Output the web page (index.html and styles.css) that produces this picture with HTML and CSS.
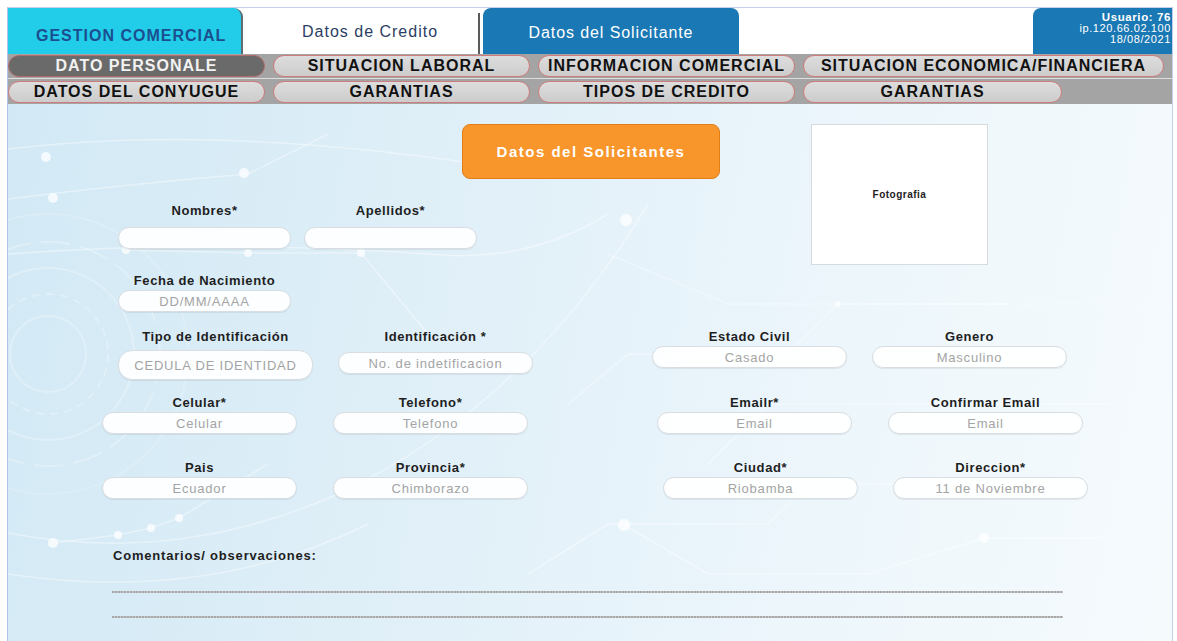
FILE: index.html
```html
<!DOCTYPE html>
<html lang="es">
<head>
    <meta charset="UTF-8">
    <meta name="viewport" content="width=device-width, initial-scale=1.0">
    <title>Datos del Solicitante</title>
    <link rel="stylesheet" href="styles.css">
</head>
<body>
<div class="marco">
    <header class="cabecera">
        <div class="tab-gestion">GESTION COMERCIAL</div>
        <div class="tab-credito">Datos de Credito</div>
        <div class="tab-solicitante">Datos del Solicitante</div>
        <div class="espacio"></div>
        <div class="usuario">
            <div class="usuario-nombre">Usuario: 76</div>
            <div>ip.120.66.02.100</div>
            <div>18/08/2021</div>
        </div>
    </header>

    <nav class="menu">
        <div class="menu-fila">
            <a class="boton activo">DATO PERSONALE</a>
            <a class="boton">SITUACION LABORAL</a>
            <a class="boton">INFORMACION COMERCIAL</a>
            <a class="boton boton-largo">SITUACION ECONOMICA/FINANCIERA</a>
        </div>
        <div class="menu-fila">
            <a class="boton">DATOS DEL CONYUGUE</a>
            <a class="boton">GARANTIAS</a>
            <a class="boton">TIPOS DE CREDITO</a>
            <a class="boton boton-medio">GARANTIAS</a>
        </div>
    </nav>

    <main class="contenido">
        <!-- fondo decorativo tipo circuito -->
        <svg class="fondo" width="1164" height="537" viewBox="0 0 1164 537">
            <g fill="none" stroke="#ffffff" stroke-opacity="0.4" stroke-width="1.5">
                <path d="M0 45 Q 200 20 470 60"/>
                <path d="M0 95 Q 120 80 240 70 L 320 30"/>
                <path d="M0 150 Q 200 135 420 150 Q 520 160 600 110"/>
                <path d="M118 146 L 240 149 L 353 149 L 420 230"/>
                <path d="M-40 420 Q 150 470 330 390 Q 520 300 640 100"/>
                <path d="M0 470 Q 200 500 360 420"/>
                <path d="M45 439 L 110 431 L 143 424 L 171 414 L 260 360"/>
                <path d="M560 300 L 620 250 L 780 250 L 830 200 L 1000 200"/>
                <path d="M520 470 L 600 420 L 760 420 L 800 380 L 1000 380"/>
                <path d="M700 360 L 760 300 L 1100 300"/>
                <path d="M616 421 L 700 470 L 860 470 L 976 434 L 1100 434"/>
                <path d="M600 150 L 720 200 L 1164 200" stroke-opacity="0.3"/>
            </g>
            <g fill="none" stroke="#ffffff" stroke-opacity="0.28" stroke-width="2">
                <circle cx="40" cy="250" r="38"/>
                <circle cx="40" cy="250" r="60" stroke-dasharray="8 6"/>
                <circle cx="40" cy="250" r="86"/>
                <circle cx="40" cy="250" r="112" stroke-dasharray="30 10"/>
                <circle cx="40" cy="250" r="140" stroke-opacity="0.18"/>
            </g>
            <g fill="#ffffff" fill-opacity="0.75">
                <circle cx="38" cy="53" r="5"/>
                <circle cx="236" cy="69" r="5"/>
                <circle cx="45" cy="94" r="5"/>
                <circle cx="118" cy="146" r="4"/>
                <circle cx="240" cy="149" r="4"/>
                <circle cx="353" cy="149" r="4"/>
                <circle cx="618" cy="116" r="6"/>
                <circle cx="45" cy="439" r="5"/>
                <circle cx="110" cy="431" r="4"/>
                <circle cx="143" cy="424" r="4"/>
                <circle cx="171" cy="414" r="4"/>
                <circle cx="616" cy="421" r="6"/>
                <circle cx="976" cy="434" r="5"/>
                <circle cx="830" cy="200" r="3"/>
            </g>
        </svg>

        <div class="formulario">
            <div class="superior">
                <div class="superior-izq">
                    <div class="titulo">Datos del Solicitantes</div>

                    <div class="fila fila-nombres">
                        <div class="campo corto">
                            <div class="etiqueta">Nombres*</div>
                            <div class="caja"></div>
                        </div>
                        <div class="campo corto">
                            <div class="etiqueta">Apellidos*</div>
                            <div class="caja"></div>
                        </div>
                    </div>

                    <div class="fila fila-fecha">
                        <div class="campo corto">
                            <div class="etiqueta">Fecha de Nacimiento</div>
                            <div class="caja">DD/MM/AAAA</div>
                        </div>
                    </div>
                </div>
                <div class="foto">Fotografia</div>
            </div>

            <div class="fila fila-ident">
                <div class="campo">
                    <div class="etiqueta">Tipo de Identificación</div>
                    <div class="caja caja-alta">CEDULA DE IDENTIDAD</div>
                </div>
                <div class="campo">
                    <div class="etiqueta">Identificación *</div>
                    <div class="caja caja-baja">No. de indetificacion</div>
                </div>
                <div class="campo estado">
                    <div class="etiqueta">Estado Civil</div>
                    <div class="caja">Casado</div>
                </div>
                <div class="campo genero">
                    <div class="etiqueta">Genero</div>
                    <div class="caja">Masculino</div>
                </div>
            </div>

            <div class="fila fila-contacto">
                <div class="campo">
                    <div class="etiqueta">Celular*</div>
                    <div class="caja">Celular</div>
                </div>
                <div class="campo">
                    <div class="etiqueta">Telefono*</div>
                    <div class="caja">Telefono</div>
                </div>
                <div class="campo email">
                    <div class="etiqueta">Emailr*</div>
                    <div class="caja">Email</div>
                </div>
                <div class="campo confirmar">
                    <div class="etiqueta">Confirmar Email</div>
                    <div class="caja">Email</div>
                </div>
            </div>

            <div class="fila fila-ubicacion">
                <div class="campo">
                    <div class="etiqueta">Pais</div>
                    <div class="caja">Ecuador</div>
                </div>
                <div class="campo">
                    <div class="etiqueta">Provincia*</div>
                    <div class="caja">Chimborazo</div>
                </div>
                <div class="campo ciudad">
                    <div class="etiqueta">Ciudad*</div>
                    <div class="caja">Riobamba</div>
                </div>
                <div class="campo direccion">
                    <div class="etiqueta">Direccion*</div>
                    <div class="caja">11 de Noviembre</div>
                </div>
            </div>

            <div class="comentarios">Comentarios/ observaciones:</div>
            <div class="linea"></div>
            <div class="linea"></div>
        </div>
    </main>
</div>
</body>
</html>
```

FILE: styles.css
```css
body {
    margin: 0;
    background-color: white;
    font-family: "Liberation Sans", Arial, sans-serif;
    color: #1e1e1e;
}

.marco {
    margin: 7px 0 0 7px;
    width: 1166px;
    height: 634px;
    box-sizing: border-box;
    border-top: 1px solid #c7cdee;
    border-left: 1px solid #b3c2ea;
    border-right: 1px solid #c3cdec;
    display: flex;
    flex-direction: column;
    overflow: hidden;
}

/* Cabecera con pestanas */
.cabecera {
    display: flex;
    height: 46px;
    background-color: white;
}

.tab-gestion {
    width: 235px;
    box-sizing: border-box;
    background-color: #21cde8;
    border-top-right-radius: 9px;
    border-right: 2px solid #5f6c74;
    color: #1c4f8f;
    font-size: 16px;
    font-weight: bold;
    letter-spacing: 1px;
    line-height: 20px;
    padding: 18px 0 0 28px;
    white-space: nowrap;
}

.tab-credito {
    width: 237px;
    margin: 5px 3px 0 0;
    box-sizing: border-box;
    border-right: 2px solid #5a5a5a;
    color: #2b3e63;
    font-size: 16px;
    letter-spacing: 1px;
    line-height: 20px;
    padding: 9px 0 0 59px;
    white-space: nowrap;
}

.tab-solicitante {
    width: 256px;
    background-color: #1a78b4;
    border-radius: 8px 8px 0 0;
    color: white;
    font-size: 16px;
    letter-spacing: 0.9px;
    line-height: 20px;
    padding-top: 15px;
    box-sizing: border-box;
    text-align: center;
    white-space: nowrap;
}

.espacio {
    flex: 1;
}

.usuario {
    width: 139px;
    box-sizing: border-box;
    background-color: #1a78b4;
    border-top-left-radius: 8px;
    color: white;
    text-align: right;
    font-size: 11px;
    letter-spacing: 0.6px;
    line-height: 11px;
    padding: 4px 1px 0 0;
}

.usuario-nombre {
    font-weight: bold;
    font-size: 11.5px;
}

/* Menu de secciones */
.menu {
    background-color: #a4a4a4;
}

.menu-fila {
    display: flex;
    align-items: center;
    gap: 8px;
    height: 25px;
    box-sizing: border-box;
}

.menu-fila:first-child {
    border-bottom: 1px solid #dedede;
}

.boton {
    width: 257px;
    height: 22px;
    box-sizing: border-box;
    border: 1.5px solid #cf7c7c;
    border-radius: 11px;
    background: linear-gradient(#dddddd, #cccccc);
    color: #111;
    font-size: 16px;
    font-weight: bold;
    letter-spacing: 1px;
    line-height: 19px;
    text-align: center;
    white-space: nowrap;
    cursor: pointer;
}

.boton.activo {
    background: #6a6a6a;
    border-color: #b46d6d;
    color: #f2f2f2;
}

.boton-largo {
    width: 361px;
}

.boton-medio {
    width: 259px;
}

/* Area del formulario */
.contenido {
    position: relative;
    flex: 1;
    overflow: hidden;
    background: linear-gradient(100deg, #d2e9f5 0%, #dbedf7 25%, #e7f3fa 55%, #f0f8fc 80%, #f5fafd 100%);
}

.fondo {
    position: absolute;
    top: 0;
    left: 0;
}

.formulario {
    position: relative;
    padding-top: 20px;
}

.superior {
    display: flex;
}

.superior-izq {
    width: 803px;
}

.titulo {
    margin-left: 454px;
    width: 258px;
    height: 55px;
    box-sizing: border-box;
    background-color: #f8952b;
    border: 1px solid #e27d18;
    border-radius: 8px;
    color: white;
    font-size: 15px;
    font-weight: bold;
    letter-spacing: 1.5px;
    display: flex;
    align-items: center;
    justify-content: center;
}

.foto {
    width: 177px;
    height: 141px;
    box-sizing: border-box;
    background-color: white;
    border: 1px solid #d6dbdf;
    display: flex;
    align-items: center;
    justify-content: center;
    font-size: 10px;
    font-weight: bold;
    letter-spacing: 0.5px;
    color: #222;
}

.fila {
    display: flex;
    align-items: flex-start;
}

.campo {
    width: 195px;
    display: flex;
    flex-direction: column;
    align-items: center;
    gap: 2px;
}

.campo.corto {
    width: 173px;
}

.etiqueta {
    font-size: 13px;
    font-weight: bold;
    letter-spacing: 0.6px;
    line-height: 15px;
    white-space: nowrap;
}

.caja {
    width: 100%;
    height: 22px;
    box-sizing: border-box;
    background-color: rgba(255, 255, 255, 0.92);
    border: 1px solid #d7dde1;
    border-radius: 12px;
    box-shadow: 0 1px 1px rgba(0, 0, 0, 0.07);
    color: #a4a4a4;
    font-size: 13px;
    letter-spacing: 0.8px;
    display: flex;
    align-items: center;
    justify-content: center;
    white-space: nowrap;
}

.fila-nombres {
    margin-top: 24px;
    padding-left: 110px;
    gap: 13px;
}

.fila-nombres .caja {
    margin-top: 7px;
}

.fila-fecha {
    margin-top: 24px;
    padding-left: 110px;
}

.fila-ident {
    margin-top: 17px;
    padding-left: 110px;
    gap: 25px;
}

.caja-alta {
    height: 30px;
    margin-top: 4px;
    border-radius: 14px;
}

.caja-baja {
    margin-top: 6px;
}

.estado {
    margin-left: 94px;
}

.fila-contacto {
    margin-top: 15px;
    padding-left: 94px;
    gap: 36px;
}

.email {
    margin-left: 93px;
}

.fila-ubicacion {
    margin-top: 26px;
    padding-left: 94px;
    gap: 36px;
}

.ciudad {
    margin-left: 99px;
}

.direccion {
    margin-left: -1px;
}

.comentarios {
    margin: 49px 0 0 105px;
    font-size: 13px;
    font-weight: bold;
    letter-spacing: 0.8px;
    line-height: 15px;
}

.linea {
    width: 951px;
    height: 2px;
    margin: 28px 0 0 104px;
    background: repeating-linear-gradient(90deg, #a8a8a8 0 2px, #c6c6c6 2px 3px);
}

.linea + .linea {
    margin-top: 23px;
}
```
